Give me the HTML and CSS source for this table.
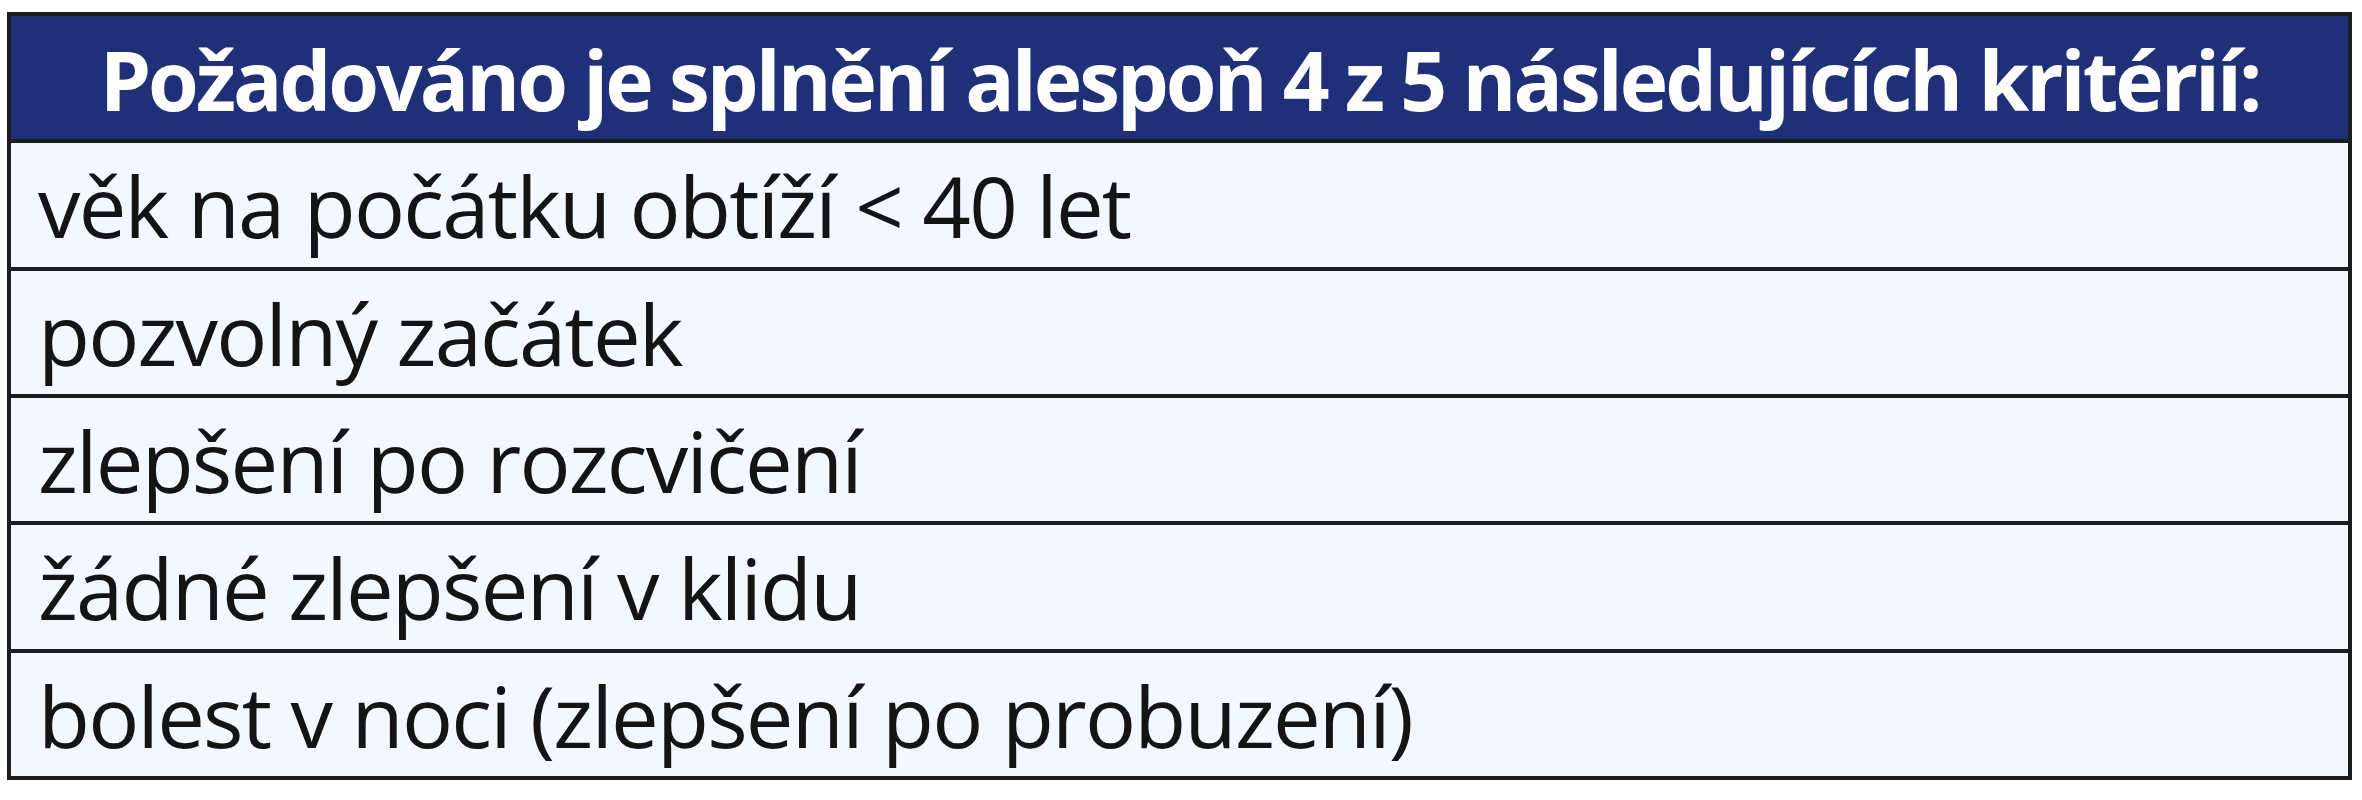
FILE: index.html
```html
<!DOCTYPE html>
<html lang="cs">
<head>
<meta charset="utf-8">
<title>Kritéria</title>
<link rel="stylesheet" href="styles.css">
</head>
<body>
<div class="page">
  <div class="criteria">
    <div class="row head">Požadováno je splnění alespoň 4 z 5 následujících kritérií:</div>
    <div class="row">věk na počátku obtíží &lt; 40 let</div>
    <div class="row">pozvolný začátek</div>
    <div class="row">zlepšení po rozcvičení</div>
    <div class="row">žádné zlepšení v klidu</div>
    <div class="row">bolest v noci (zlepšení po probuzení)</div>
  </div>
</div>
</body>
</html>
```
FILE: styles.css
```css
html, body {
  margin: 0;
  padding: 0;
  background: #ffffff;
}
.page {
  padding: 12px 10px 0 7px;
}
.criteria {
  width: 2345px;
  box-sizing: border-box;
  border: 4px solid #1c1d1d;
  display: flex;
  flex-direction: column;
  font-family: "Open Sans", "Noto Sans", sans-serif;
}
.row {
  height: 127.33px;
  display: flex;
  align-items: center;
  padding: 2px 0 0 27px;
  box-sizing: border-box;
  background: #f3f8fe;
  color: #141414;
  font-size: 85px;
  line-height: 1;
  letter-spacing: -1.8px;
  border-top: 4px solid #1c1d1d;
  white-space: nowrap;
}
.row.head {
  border-top: none;
  height: 123.33px;
  justify-content: center;
  padding: 2px 0 0 0;
  background: #1f2f78;
  color: #ffffff;
  font-weight: 700;
  font-size: 82px;
  letter-spacing: -3px;
}
```
